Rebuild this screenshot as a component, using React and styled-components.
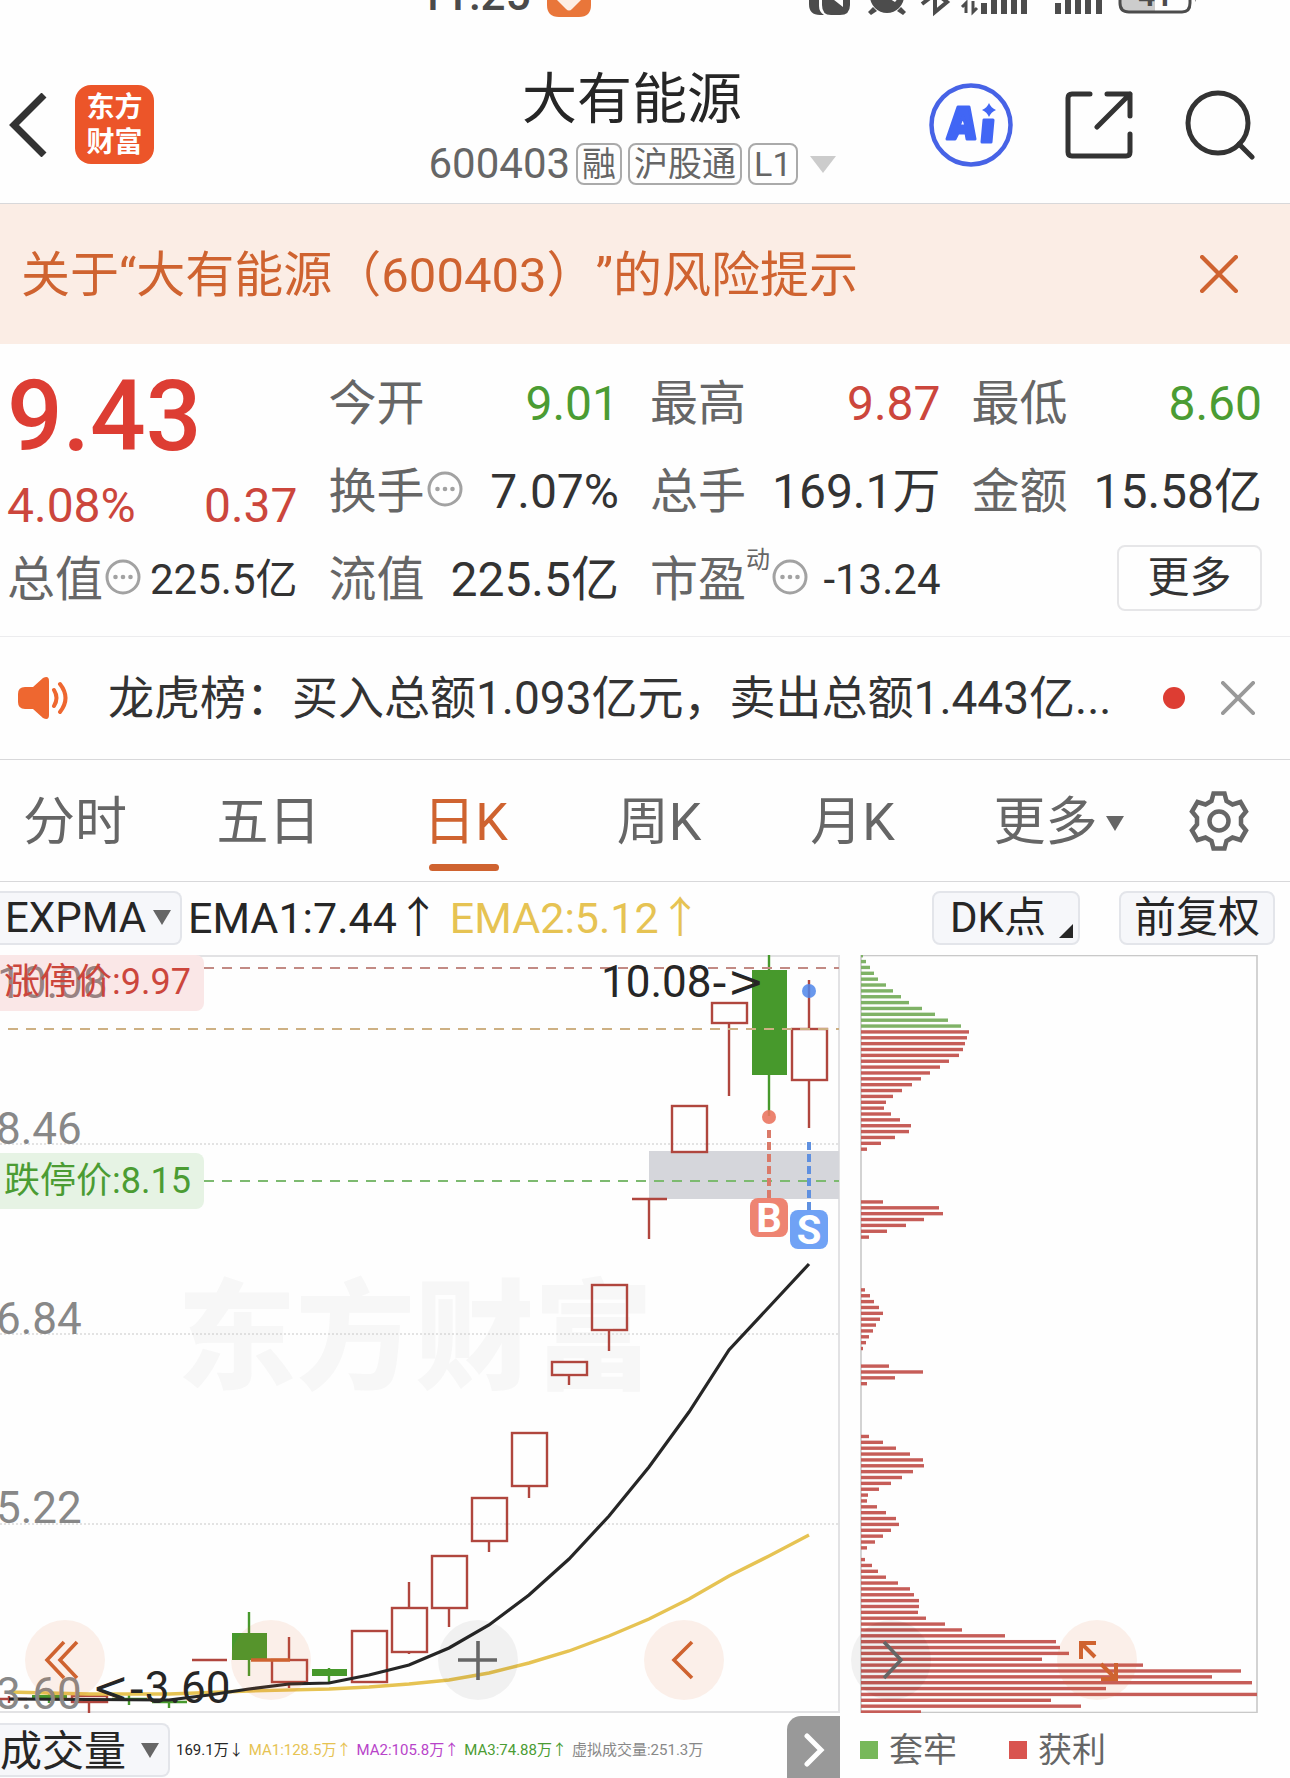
import React from "react";
import styled, { createGlobalStyle } from "styled-components";

const color = {
  ink: "#262626",
  text: "#333",
  label: "#666",
  muted: "#888",
  accent: "#cf6330",
  up: "#dd3d33",
  upText: "#cc463c",
  down: "#4b9c33",
  ema2: "#e6c353",
  line: "#d8d8da",
};

const Global = createGlobalStyle`
  *, *::before, *::after { box-sizing: border-box; }
  body { margin: 0; background: #fefefe; text-spacing-trim: space-all; }
  body, button, select { font-family: Roboto, "Noto Sans CJK SC", sans-serif; }
  button, select { margin: 0; padding: 0; border: 0; background: none; color: inherit; font-size: inherit; cursor: pointer; }
  svg { display: block; }
`;

const Page = styled.div`
  width: 100%;
  background: #fefefe;
  color: ${color.text};
  overflow: hidden;
`;

/* ---------- status bar ---------- */
const StatusBar = styled.div`
  display: flex;
  align-items: flex-end;
  justify-content: space-between;
  height: 20px;
  padding: 0 92px 0 419px;
  overflow: hidden;
`;
const StatusLeft = styled.div`
  display: flex;
  align-items: flex-end;
  gap: 16px;
`;
const Clock = styled.span`
  padding-bottom: 3px;
  font-size: 44px;
  line-height: 44px;
  font-weight: 500;
  color: #4a4a4a;
`;

/* ---------- header ---------- */
const Header = styled.header`
  display: grid;
  grid-template-columns: 1fr auto 1fr;
  align-items: center;
  height: 184px;
  padding: 0 35px 0 9px;
  border-bottom: 1px solid ${color.line};
`;
const HeaderLeft = styled.div`
  display: flex;
  align-items: center;
  gap: 28px;
  padding-top: 26px;
`;
const HeaderRight = styled.div`
  display: flex;
  align-items: center;
  justify-content: flex-end;
  gap: 52px;
  padding-top: 26px;
`;
const IconButton = styled.button`
  display: grid;
  place-items: center;
  flex: none;
`;
const Logo = styled.div`
  width: 79px;
  height: 79px;
  padding-top: 5px;
  border-radius: 16px;
  background: #ec5529;
  color: #fff;
  font-size: 28px;
  line-height: 35px;
  font-weight: 700;
  text-align: center;
`;
const TitleBlock = styled.div`
  display: flex;
  flex-direction: column;
  align-items: center;
  gap: 5px;
  padding-top: 28px;
`;
const Title = styled.h1`
  margin: 0;
  font-size: 55px;
  line-height: 72px;
  font-weight: 400;
  color: ${color.ink};
`;
const SubTitle = styled.div`
  display: flex;
  align-items: center;
  gap: 6px;
  color: ${color.label};
`;
const Code = styled.span`
  font-size: 42px;
  line-height: 48px;
`;
const Tag = styled.span`
  height: 42px;
  padding: 0 4px;
  border: 2px solid #aaa;
  border-radius: 8px;
  font-size: 34px;
  line-height: 38px;
`;
const Caret = styled.span`
  display: inline-block;
  flex: none;
  border-style: solid;
  border-color: ${(p) => p.$color || color.label} transparent transparent;
  border-width: ${(p) => (p.$large ? "17px 13px 0" : "15px 9px 0")};
  margin-left: ${(p) => p.$space || 0}px;
`;

/* ---------- risk banner ---------- */
const Banner = styled.div`
  display: flex;
  align-items: center;
  justify-content: space-between;
  height: 140px;
  padding: 0 52px 0 21px;
  background: #fbede5;
  color: ${color.accent};
`;
const BannerLink = styled.a`
  padding-top: 4px;
  color: inherit;
  text-decoration: none;
  font-size: 49px;
  line-height: 64px;
  white-space: nowrap;
`;

/* ---------- quote ---------- */
const Quote = styled.section`
  display: grid;
  grid-template-columns: repeat(4, 1fr);
  grid-template-rows: repeat(3, 88px);
  column-gap: 31px;
  padding: 16px 28px 12px 7px;
  border-bottom: 1px solid #ececee;
`;
const Summary = styled.div`
  grid-row: span 2;
  display: flex;
  flex-direction: column;
  gap: 9px;
  padding-top: 7px;
  color: ${color.up};
`;
const Price = styled.strong`
  font-size: 98px;
  line-height: 100px;
  font-weight: 500;
`;
const Change = styled.div`
  display: flex;
  justify-content: space-between;
  font-size: 48px;
  line-height: 60px;
  color: ${color.upText};
`;
const Field = styled.div`
  display: flex;
  align-items: center;
  justify-content: space-between;
  white-space: nowrap;
  svg { margin-bottom: 6px; }
`;
const FieldLabel = styled.span`
  display: flex;
  align-items: center;
  font-size: 48px;
  line-height: 60px;
  color: ${color.label};
`;
const Sup = styled.sup`
  align-self: flex-start;
  font-size: 24px;
  line-height: 20px;
`;
const FieldValue = styled.span`
  font-size: ${(p) => (p.$small ? 42 : 48)}px;
  line-height: 60px;
  color: ${(p) => p.$color || color.text};
`;
const MoreButton = styled.button`
  justify-self: end;
  width: 145px;
  height: 66px;
  margin-top: 9px;
  border: 2px solid #e6e6e8;
  border-radius: 8px;
  font-size: 42px;
  line-height: 58px;
`;

/* ---------- news ---------- */
const News = styled.div`
  display: flex;
  align-items: center;
  height: 123px;
  padding: 0 35px 0 18px;
  border-bottom: 1px solid ${color.line};
`;
const NewsLink = styled.a`
  flex: 1;
  min-width: 0;
  margin-left: 38px;
  color: ${color.text};
  text-decoration: none;
  font-size: 46px;
  line-height: 60px;
  white-space: nowrap;
`;
const RedDot = styled.span`
  width: 22px;
  height: 22px;
  margin-right: 36px;
  border-radius: 50%;
  background: ${color.up};
`;

/* ---------- tabs ---------- */
const Tabs = styled.nav`
  display: grid;
  grid-template-columns: 170fr 197fr 197fr 190fr 197fr 215fr 124fr;
  height: 122px;
  border-bottom: 1px solid ${color.line};
`;
const Tab = styled.button`
  position: relative;
  display: flex;
  align-items: center;
  justify-content: center;
  padding-top: 5px;
  font-size: 52px;
  line-height: 64px;
  color: ${(p) => (p.$active ? color.accent : color.label)};
  &:first-child { padding-right: 20px; }
  &:last-child { padding: 0 18px 0 0; }
  &::after {
    content: "";
    display: ${(p) => (p.$active ? "block" : "none")};
    position: absolute;
    bottom: 10px;
    left: 50%;
    width: 70px;
    height: 7px;
    margin-left: -37px;
    border-radius: 4px;
    background: ${color.accent};
  }
`;

/* ---------- indicator toolbar ---------- */
const Toolbar = styled.div`
  display: flex;
  align-items: center;
  height: 73px;
  padding: 0 15px 2px 0;
  font-size: 43px;
  line-height: 54px;
  color: ${color.ink};
  white-space: nowrap;
`;
const Picker = styled.label`
  position: relative;
  display: flex;
  align-items: center;
  flex: none;
  width: ${(p) => p.$width}px;
  height: 54px;
  margin-right: 6px;
  border: 2px solid #e3e5ea;
  border-left: 0;
  border-radius: 0 8px 8px 0;
  background: #f6f7fa;
  select {
    width: 100%;
    height: 50px;
    padding-left: ${(p) => p.$inset}px;
    appearance: none;
    font-size: 42px;
    line-height: 50px;
    color: ${color.ink};
  }
  ${Caret} {
    position: absolute;
    right: 9px;
    pointer-events: none;
  }
`;
const Ema = styled.span`
  margin-right: 10px;
  color: ${(p) => p.$color || color.ink};
`;
const Spacer = styled.span`
  flex: 1;
`;
const Chip = styled.button`
  position: relative;
  width: ${(p) => p.$width}px;
  height: 54px;
  margin-left: 39px;
  border: 2px solid #e3e5ea;
  border-radius: 8px;
  background: #f6f7fa;
  font-size: 42px;
  line-height: 48px;
  padding-right: ${(p) => (p.$corner ? 16 : 0)}px;
  &::after {
    content: "";
    display: ${(p) => (p.$corner ? "block" : "none")};
    position: absolute;
    right: 5px;
    bottom: 5px;
    border-style: solid;
    border-width: 0 0 14px 14px;
    border-color: transparent transparent ${color.ink};
  }
`;

/* ---------- charts ---------- */
const Charts = styled.div`
  position: relative;
  display: grid;
  grid-template-columns: 840fr 398fr;
  column-gap: 20px;
  padding-right: 32px;
  svg { width: 100%; height: auto; }
`;
const ControlRow = styled.div`
  position: absolute;
  left: 25px;
  right: 153px;
  bottom: 13px;
  display: flex;
  justify-content: space-between;
`;
const RoundButton = styled.button`
  width: 80px;
  height: 80px;
  border-radius: 50%;
  color: ${(p) => (p.$grey ? color.label : color.accent)};
  background: ${(p) => (p.$grey ? "rgba(0,0,0,.05)" : "rgba(226,110,50,.1)")};
`;

/* ---------- footer ---------- */
const Footer = styled.div`
  display: grid;
  grid-template-columns: 840fr 398fr;
  column-gap: 20px;
  height: 65px;
  padding-right: 32px;
`;
const Volume = styled.div`
  display: flex;
  align-items: center;
  padding-top: 9px;
  height: 65px;
  select { padding-top: 2px; }
`;
const VolumeStats = styled.div`
  display: flex;
  gap: 5px;
  flex: 1;
  font-size: 15px;
  line-height: 28px;
  white-space: nowrap;
`;
const Stat = styled.span`
  color: ${(p) => p.$color};
`;
const NextButton = styled.button`
  display: grid;
  place-items: center;
  width: 53px;
  height: 63px;
  margin-top: -6px;
  padding-top: 5px;
  border-radius: 14px 0 0 0;
  background: #999;
`;
const Legend = styled.div`
  display: flex;
  align-items: center;
  gap: 52px;
  padding-top: 8px;
`;
const LegendItem = styled.span`
  display: flex;
  align-items: center;
  gap: 11px;
  font-size: 34px;
  line-height: 44px;
  color: ${color.label};
  &::before {
    content: "";
    width: 18px;
    height: 18px;
    background: ${(p) => p.$color};
  }
`;

/* ---------- data ---------- */
const CANDLES = [
  { x: 9, top: 1699, bottom: 1699, high: 1696, low: 1703, up: true },
  { x: 49, top: 1695, bottom: 1699, high: 1692, low: 1703 },
  { x: 89, top: 1696, bottom: 1702, high: 1695, low: 1713, up: true },
  { x: 129, top: 1699, bottom: 1699, high: 1693, low: 1705 },
  { x: 169, top: 1702, bottom: 1702, high: 1702, low: 1708 },
  { x: 209, top: 1660, bottom: 1660, high: 1660, low: 1660, up: true },
  { x: 249, top: 1633, bottom: 1660, high: 1612, low: 1676 },
  { x: 289, top: 1660, bottom: 1682, high: 1637, low: 1688, up: true },
  { x: 329, top: 1669, bottom: 1676, high: 1668, low: 1682 },
  { x: 369, top: 1631, bottom: 1682, high: 1631, low: 1683, up: true },
  { x: 409, top: 1608, bottom: 1652, high: 1582, low: 1654, up: true },
  { x: 449, top: 1556, bottom: 1608, high: 1556, low: 1627, up: true },
  { x: 489, top: 1498, bottom: 1541, high: 1498, low: 1552, up: true },
  { x: 529, top: 1433, bottom: 1486, high: 1433, low: 1498, up: true },
  { x: 569, top: 1362, bottom: 1375, high: 1362, low: 1385, up: true },
  { x: 609, top: 1285, bottom: 1330, high: 1285, low: 1351, up: true },
  { x: 649, top: 1199, bottom: 1199, high: 1199, low: 1239, up: true },
  { x: 689, top: 1106, bottom: 1152, high: 1106, low: 1152, up: true },
  { x: 729, top: 1003, bottom: 1023, high: 1003, low: 1096, up: true },
  { x: 769, top: 970, bottom: 1075, high: 955, low: 1116 },
  { x: 809, top: 1029, bottom: 1080, high: 980, low: 1128, up: true },
];
const EMA1 = "9,1699 169,1700 209,1695 249,1689 289,1684 329,1683 369,1675 409,1665 449,1648 489,1625 529,1595 569,1559 609,1516 649,1467 689,1412 729,1350 769,1307 809,1264";
const EMA2 = "9,1692 89,1694 169,1694 249,1691 329,1689 369,1687 409,1684 449,1680 489,1673 529,1663 569,1651 609,1636 649,1619 689,1599 729,1576 769,1556 809,1535";

/* chip distribution: first price level of each run, then bar lengths */
const CHIPS = [
  [0, [2, 5, 9, 13, 17, 25, 32, 40, 48, 61, 74, 87, 100, 108, 106, 104, 102, 98, 88, 79, 69, 60, 51, 41, 32, 25, 23, 30, 39, 50, 48, 34, 20, 6]],
  [42, [22, 78, 82, 63, 45, 26, 8]],
  [57, [4, 9, 13, 18, 22, 19, 15, 12, 8, 5, 2]],
  [70, [28, 62, 34, 6]],
  [82, [8, 22, 35, 49, 62, 63, 52, 41, 30, 18, 7, 6, 16, 25, 35, 38, 30, 22, 14, 6]],
  [103, [4, 11, 17, 25, 37, 49, 53, 58, 58, 57, 65, 84, 101, 144, 195, 199, 208, 181, 282, 380, 351, 391, 245, 396, 190, 220, 60]],
];

function Candle({ x, top, bottom, high, low, up }) {
  const c = up ? "#b0463e" : "#47992c";
  return (
    <g stroke={c} strokeWidth="2.4" fill="none">
      <path d={`M${x} ${high}V${top}M${x} ${bottom}V${low}`} />
      {top === bottom ? (
        <path d={`M${x - 17} ${top}H${x + 18}`} />
      ) : up ? (
        <rect x={x - 17} y={top} width="35" height={bottom - top} />
      ) : (
        <rect x={x - 17} y={top} width="35" height={bottom - top} fill={c} stroke="none" />
      )}
    </g>
  );
}

function KLineChart() {
  const axis = [["8.46", 1144], ["6.84", 1334], ["5.22", 1523], ["3.60", 1709]];
  return (
    <svg viewBox="0 955 840 758" role="img" aria-label="日K" fontFamily='Roboto, "Noto Sans CJK SC", sans-serif'>
      <text x="177" y="1380" fontSize="119" fontWeight="900" fill="#f7f7f7" fontFamily='"Noto Sans CJK SC", sans-serif'>东方财富</text>
      <path d="M0 1144H839M0 1334H839M0 1524H839" stroke="#c8c8c8" strokeWidth="1" strokeDasharray="2 2" />
      <path d="M0 956H839V1712H0" fill="none" stroke="#e2e2e4" strokeWidth="2" />
      <rect x="649" y="1151" width="190" height="48" fill="#d5d6db" />
      {CANDLES.map((c) => <Candle key={c.x} {...c} />)}
      <path d="M204 968H839" stroke="#c28a84" strokeWidth="2" strokeDasharray="10 8" />
      <path d="M8 1029H839" stroke="#cdb083" strokeWidth="2" strokeDasharray="10 8" />
      <path d="M204 1181H839" stroke="#7dba70" strokeWidth="2" strokeDasharray="10 8" />
      <polyline points={EMA2} fill="none" stroke={color.ema2} strokeWidth="3.4" />
      <polyline points={EMA1} fill="none" stroke={color.ink} strokeWidth="3.2" />
      <path d="M0 955H196a8 8 0 0 1 8 8V1003a8 8 0 0 1 -8 8H0Z" fill="#fae7e7" />
      <g fill={color.muted} fontSize="44">
        <text x="-3" y="998" fill="#998282">10.08</text>
        {axis.map(([t, y]) => <text key={t} x="-4" y={y}>{t}</text>)}
      </g>
      <text x="4" y="994" fontSize="36" fill={color.upText}>涨停价:9.97</text>
      <path d="M0 1153H196a8 8 0 0 1 8 8V1201a8 8 0 0 1 -8 8H0Z" fill="#e6f3e4" />
      <text x="4" y="1193" fontSize="36" fill={color.down}>跌停价:8.15</text>
      <g fill={color.ink} fontSize="44">
        <text x="601" y="997">10.08<tspan fontFamily="DejaVu Sans">-&gt;</tspan></text>
        <text x="92" y="1703"><tspan fontFamily="DejaVu Sans">&lt;-</tspan>3.60</text>
      </g>
      <circle cx="809" cy="991" r="7" fill="#4f86ea" fillOpacity=".85" />
      <circle cx="769" cy="1117" r="7" fill="#ea7561" fillOpacity=".9" />
      <path d="M769 1130V1198" stroke="#da7a69" strokeWidth="4" strokeDasharray="8 4" />
      <path d="M809 1142V1210" stroke="#5f90e0" strokeWidth="4" strokeDasharray="8 4" />
      <rect x="750" y="1198" width="38" height="39" rx="8" fill="#ee8472" />
      <rect x="790" y="1210" width="38" height="39" rx="8" fill="#70a2f5" />
      <g fill="#fff" fontSize="40" fontWeight="700" textAnchor="middle">
        <text x="769" y="1232">B</text>
        <text x="809" y="1244">S</text>
      </g>
    </svg>
  );
}

function ChipChart() {
  return (
    <svg viewBox="860 955 398 758" role="img" aria-label="筹码分布">
      <rect x="861" y="955.5" width="396" height="757" fill="none" stroke="#c9c9c9" strokeWidth="1.6" />
      {CHIPS.map(([start, bars]) =>
        bars.map((w, k) => {
          const i = start + k;
          return <rect key={i} x="861" y={954 + 5.863 * i} width={w} height="3.4" fill={i < 13 ? "#7fb266" : "#c65d58"} />;
        })
      )}
    </svg>
  );
}

const Cross = ({ size, stroke }) => (
  <svg width={size} height={size} viewBox="0 0 36 36" fill="none" stroke={stroke} strokeWidth="4" strokeLinecap="round">
    <path d="M2 2L34 34M34 2L2 34" />
  </svg>
);
const Dots = () => (
  <svg width="38" height="38" viewBox="0 0 38 38" fill="none" stroke="#a2a2a2" strokeWidth="3">
    <circle cx="20" cy="19" r="16" />
    <g fill="#a2a2a2" stroke="none">
      <circle cx="12.5" cy="19" r="2.3" /><circle cx="20" cy="19" r="2.3" /><circle cx="27.5" cy="19" r="2.3" />
    </g>
  </svg>
);
const Round = ({ label, grey, d, width = 3.6 }) => (
  <RoundButton aria-label={label} $grey={grey}>
    <svg viewBox="0 0 80 80" fill="none" stroke="currentColor" strokeWidth={width}><path d={d} /></svg>
  </RoundButton>
);

function StatusIcons() {
  return (
    <svg width="390" height="20" viewBox="808 0 390 20" fill="#4c4c4c">
      <path d="M809 -4V4Q809 15 820 15H824Q819 12 819 6V-4Z" />
      <path d="M822 -4V5Q822 15 831 15H840Q850 15 850 5V-4H843V7L829 -4Z" />
      <path d="M870 -4A17 17 0 0 0 904 -4L900 -4L895 2L885 -4ZM873 7L868 12L871 15L877 11ZM901 7L906 12L903 15L897 11Z" />
      <path d="M922 4L935 -6V12L947 2L938 -5" fill="none" stroke="#4c4c4c" strokeWidth="4" />
      <path d="M966 13V3L962 7M973 1V12L977 8" fill="none" stroke="#4c4c4c" strokeWidth="3" />
      <path d="M981 3h6v11h-6zM991 0h6v14h-6zM1001 0h6v14h-6zM1011 0h6v14h-6zM1021 0h6v14h-6z" />
      <path d="M1055 3h6v11h-6zM1065 0h6v14h-6zM1075 0h6v14h-6zM1085 0h6v14h-6zM1096 0h6v14h-6z" />
      <path d="M1121 -6V3Q1121 11 1129 11H1155V-6Z" fill="#ccc" />
      <path d="M1120 -6V3Q1120 12 1129 12H1182Q1190 12 1190 3V-6" fill="none" stroke="#4c4c4c" strokeWidth="3" />
      <path d="M1195 -3A5 5 0 0 1 1195 2Z" />
      <text x="1138" y="6" fontSize="30" fontWeight="700" fontFamily="Roboto">41</text>
    </svg>
  );
}

export default function App() {
  return (
    <Page>
      <Global />
      <StatusBar>
        <StatusLeft>
          <Clock>11:25</Clock>
          <svg width="44" height="20" viewBox="0 0 44 20">
            <path d="M0 0H44V5Q44 17 32 17H12Q0 17 0 5Z" fill="#e9763a" />
            <path d="M10 0H34L25 9Q22 12 19 9Z" fill="#fdeee4" />
          </svg>
        </StatusLeft>
        <StatusIcons />
      </StatusBar>

      <Header>
        <HeaderLeft>
          <IconButton aria-label="返回">
            <svg width="38" height="64" viewBox="0 0 38 64" fill="none" stroke="#333" strokeWidth="7"><path d="M35 2L5 32L35 62" /></svg>
          </IconButton>
          <Logo>东方<br />财富</Logo>
        </HeaderLeft>
        <TitleBlock>
          <Title>大有能源</Title>
          <SubTitle>
            <Code>600403</Code>
            <Tag>融</Tag>
            <Tag>沪股通</Tag>
            <Tag>L1</Tag>
            <Caret $large $color="#ccc" $space={6} />
          </SubTitle>
        </TitleBlock>
        <HeaderRight>
          <IconButton aria-label="Ai">
            <svg width="84" height="84" viewBox="0 0 84 84">
              <circle cx="42" cy="42" r="39.5" fill="none" stroke="#4763e6" strokeWidth="4.5" />
              <g fill="#4166f5" stroke="#4166f5" strokeWidth="3" strokeLinejoin="round">
                <path fillRule="evenodd" d="M29 24H40L46 56H38L37 50H29L26 56H18ZM34 33L30 43H37Z" />
                <path d="M55 37H64L62 59H53Z" />
              </g>
              <path d="M60 20Q62 25 67 27Q62 29 60 34Q58 29 53 27Q58 25 60 20Z" fill="#4166f5" />
            </svg>
          </IconButton>
          <IconButton aria-label="分享">
            <svg width="68" height="68" viewBox="0 0 68 68" fill="none" stroke="#333" strokeWidth="5" strokeLinecap="round" strokeLinejoin="round">
              <path d="M25 3H7Q3 3 3 7V61Q3 65 7 65H61Q65 65 65 61V43M42 3H65V25M65 3L32 36" />
            </svg>
          </IconButton>
          <IconButton aria-label="搜索">
            <svg width="70" height="70" viewBox="0 0 70 70" fill="none" stroke="#333" strokeWidth="5" strokeLinecap="round">
              <circle cx="33" cy="33" r="30" /><path d="M54 54L67 67" />
            </svg>
          </IconButton>
        </HeaderRight>
      </Header>

      <Banner>
        <BannerLink href="#risk">关于“大有能源（600403）”的风险提示</BannerLink>
        <IconButton aria-label="关闭"><Cross size={38} stroke={color.accent} /></IconButton>
      </Banner>

      <Quote>
        <Summary>
          <Price>9.43</Price>
          <Change><span>4.08%</span><span>0.37</span></Change>
        </Summary>
        <Field><FieldLabel>今开</FieldLabel><FieldValue $color={color.down}>9.01</FieldValue></Field>
        <Field><FieldLabel>最高</FieldLabel><FieldValue $color={color.upText}>9.87</FieldValue></Field>
        <Field><FieldLabel>最低</FieldLabel><FieldValue $color={color.down}>8.60</FieldValue></Field>
        <Field><FieldLabel>换手<Dots /></FieldLabel><FieldValue>7.07%</FieldValue></Field>
        <Field><FieldLabel>总手</FieldLabel><FieldValue>169.1万</FieldValue></Field>
        <Field><FieldLabel>金额</FieldLabel><FieldValue>15.58亿</FieldValue></Field>
        <Field><FieldLabel>总值<Dots /></FieldLabel><FieldValue $small>225.5亿</FieldValue></Field>
        <Field><FieldLabel>流值</FieldLabel><FieldValue>225.5亿</FieldValue></Field>
        <Field><FieldLabel>市盈<Sup>动</Sup><Dots /></FieldLabel><FieldValue $small>-13.24</FieldValue></Field>
        <MoreButton>更多</MoreButton>
      </Quote>

      <News>
        <svg width="52" height="44" viewBox="0 0 52 44" fill="#ee6730">
          <path d="M7 11H15L25 2Q31 -1 31 5V39Q31 45 25 42L15 33H7Q0 33 0 26V18Q0 11 7 11Z" />
          <path d="M36 14Q41 22 36 30M42 8Q53 22 42 36" fill="none" stroke="#ee6730" strokeWidth="4" strokeLinecap="round" />
        </svg>
        <NewsLink href="#news">龙虎榜：买入总额1.093亿元，卖出总额1.443亿...</NewsLink>
        <RedDot />
        <IconButton aria-label="关闭"><Cross size={34} stroke="#999" /></IconButton>
      </News>

      <Tabs>
        <Tab>分时</Tab>
        <Tab>五日</Tab>
        <Tab $active>日K</Tab>
        <Tab>周K</Tab>
        <Tab>月K</Tab>
        <Tab>更多<Caret $space={8} /></Tab>
        <Tab aria-label="设置">
          <svg width="62" height="62" viewBox="-31 -31 62 62" fill="none" stroke={color.label} strokeWidth="4.5">
            <path d="M-5.5 -27.5H5.5L7.5 -20L13.5 -16.5L21.5 -19L27 -9.5L22 -3.5V3.5L27 9.5L21.5 19L13.5 16.5L7.5 20L5.5 27.5H-5.5L-7.5 20L-13.5 16.5L-21.5 19L-27 9.5L-22 3.5V-3.5L-27 -9.5L-21.5 -19L-13.5 -16.5L-7.5 -20Z" />
            <circle r="9.5" />
          </svg>
        </Tab>
      </Tabs>

      <Toolbar>
        <Picker $width={182} $inset={5}>
          <select aria-label="指标" defaultValue="EXPMA"><option>EXPMA</option></select>
          <Caret />
        </Picker>
        <Ema>EMA1:7.44↑</Ema>
        <Ema $color={color.ema2}>EMA2:5.12↑</Ema>
        <Spacer />
        <Chip $width={148} $corner>DK点</Chip>
        <Chip $width={156}>前复权</Chip>
      </Toolbar>

      <Charts>
        <KLineChart />
        <ChipChart />
        <ControlRow>
          <Round label="最左" d="M39 22L22 40L39 58M52 22L35 40L52 58" />
          <Round label="缩小" d="M20 40H59" />
          <Round label="放大" grey d="M20 40H59M40 21V60" />
          <Round label="左移" d="M48 22L30 40L48 58" />
          <Round label="右移" grey d="M33 22L50 40L33 58" />
          <Round label="全屏" width={4} d="M39 23H24V39M24 23L38 37M44 59H59V43M59 59L44 44" />
        </ControlRow>
      </Charts>

      <Footer>
        <Volume>
          <Picker $width={170} $inset={0}>
            <select aria-label="副图指标" defaultValue="成交量"><option>成交量</option></select>
            <Caret />
          </Picker>
          <VolumeStats>
            <Stat $color={color.ink}>169.1万↓</Stat>
            <Stat $color={color.ema2}>MA1:128.5万↑</Stat>
            <Stat $color="#b844c9">MA2:105.8万↑</Stat>
            <Stat $color={color.down}>MA3:74.88万↑</Stat>
            <Stat $color={color.muted}>虚拟成交量:251.3万</Stat>
          </VolumeStats>
          <NextButton aria-label="下一个">
            <svg width="22" height="34" viewBox="0 0 22 34" fill="none" stroke="#fff" strokeWidth="5" strokeLinecap="round"><path d="M4 3L18 17L4 31" /></svg>
          </NextButton>
        </Volume>
        <Legend>
          <LegendItem $color="#77b85a">套牢</LegendItem>
          <LegendItem $color="#d9544f">获利</LegendItem>
        </Legend>
      </Footer>
    </Page>
  );
}
